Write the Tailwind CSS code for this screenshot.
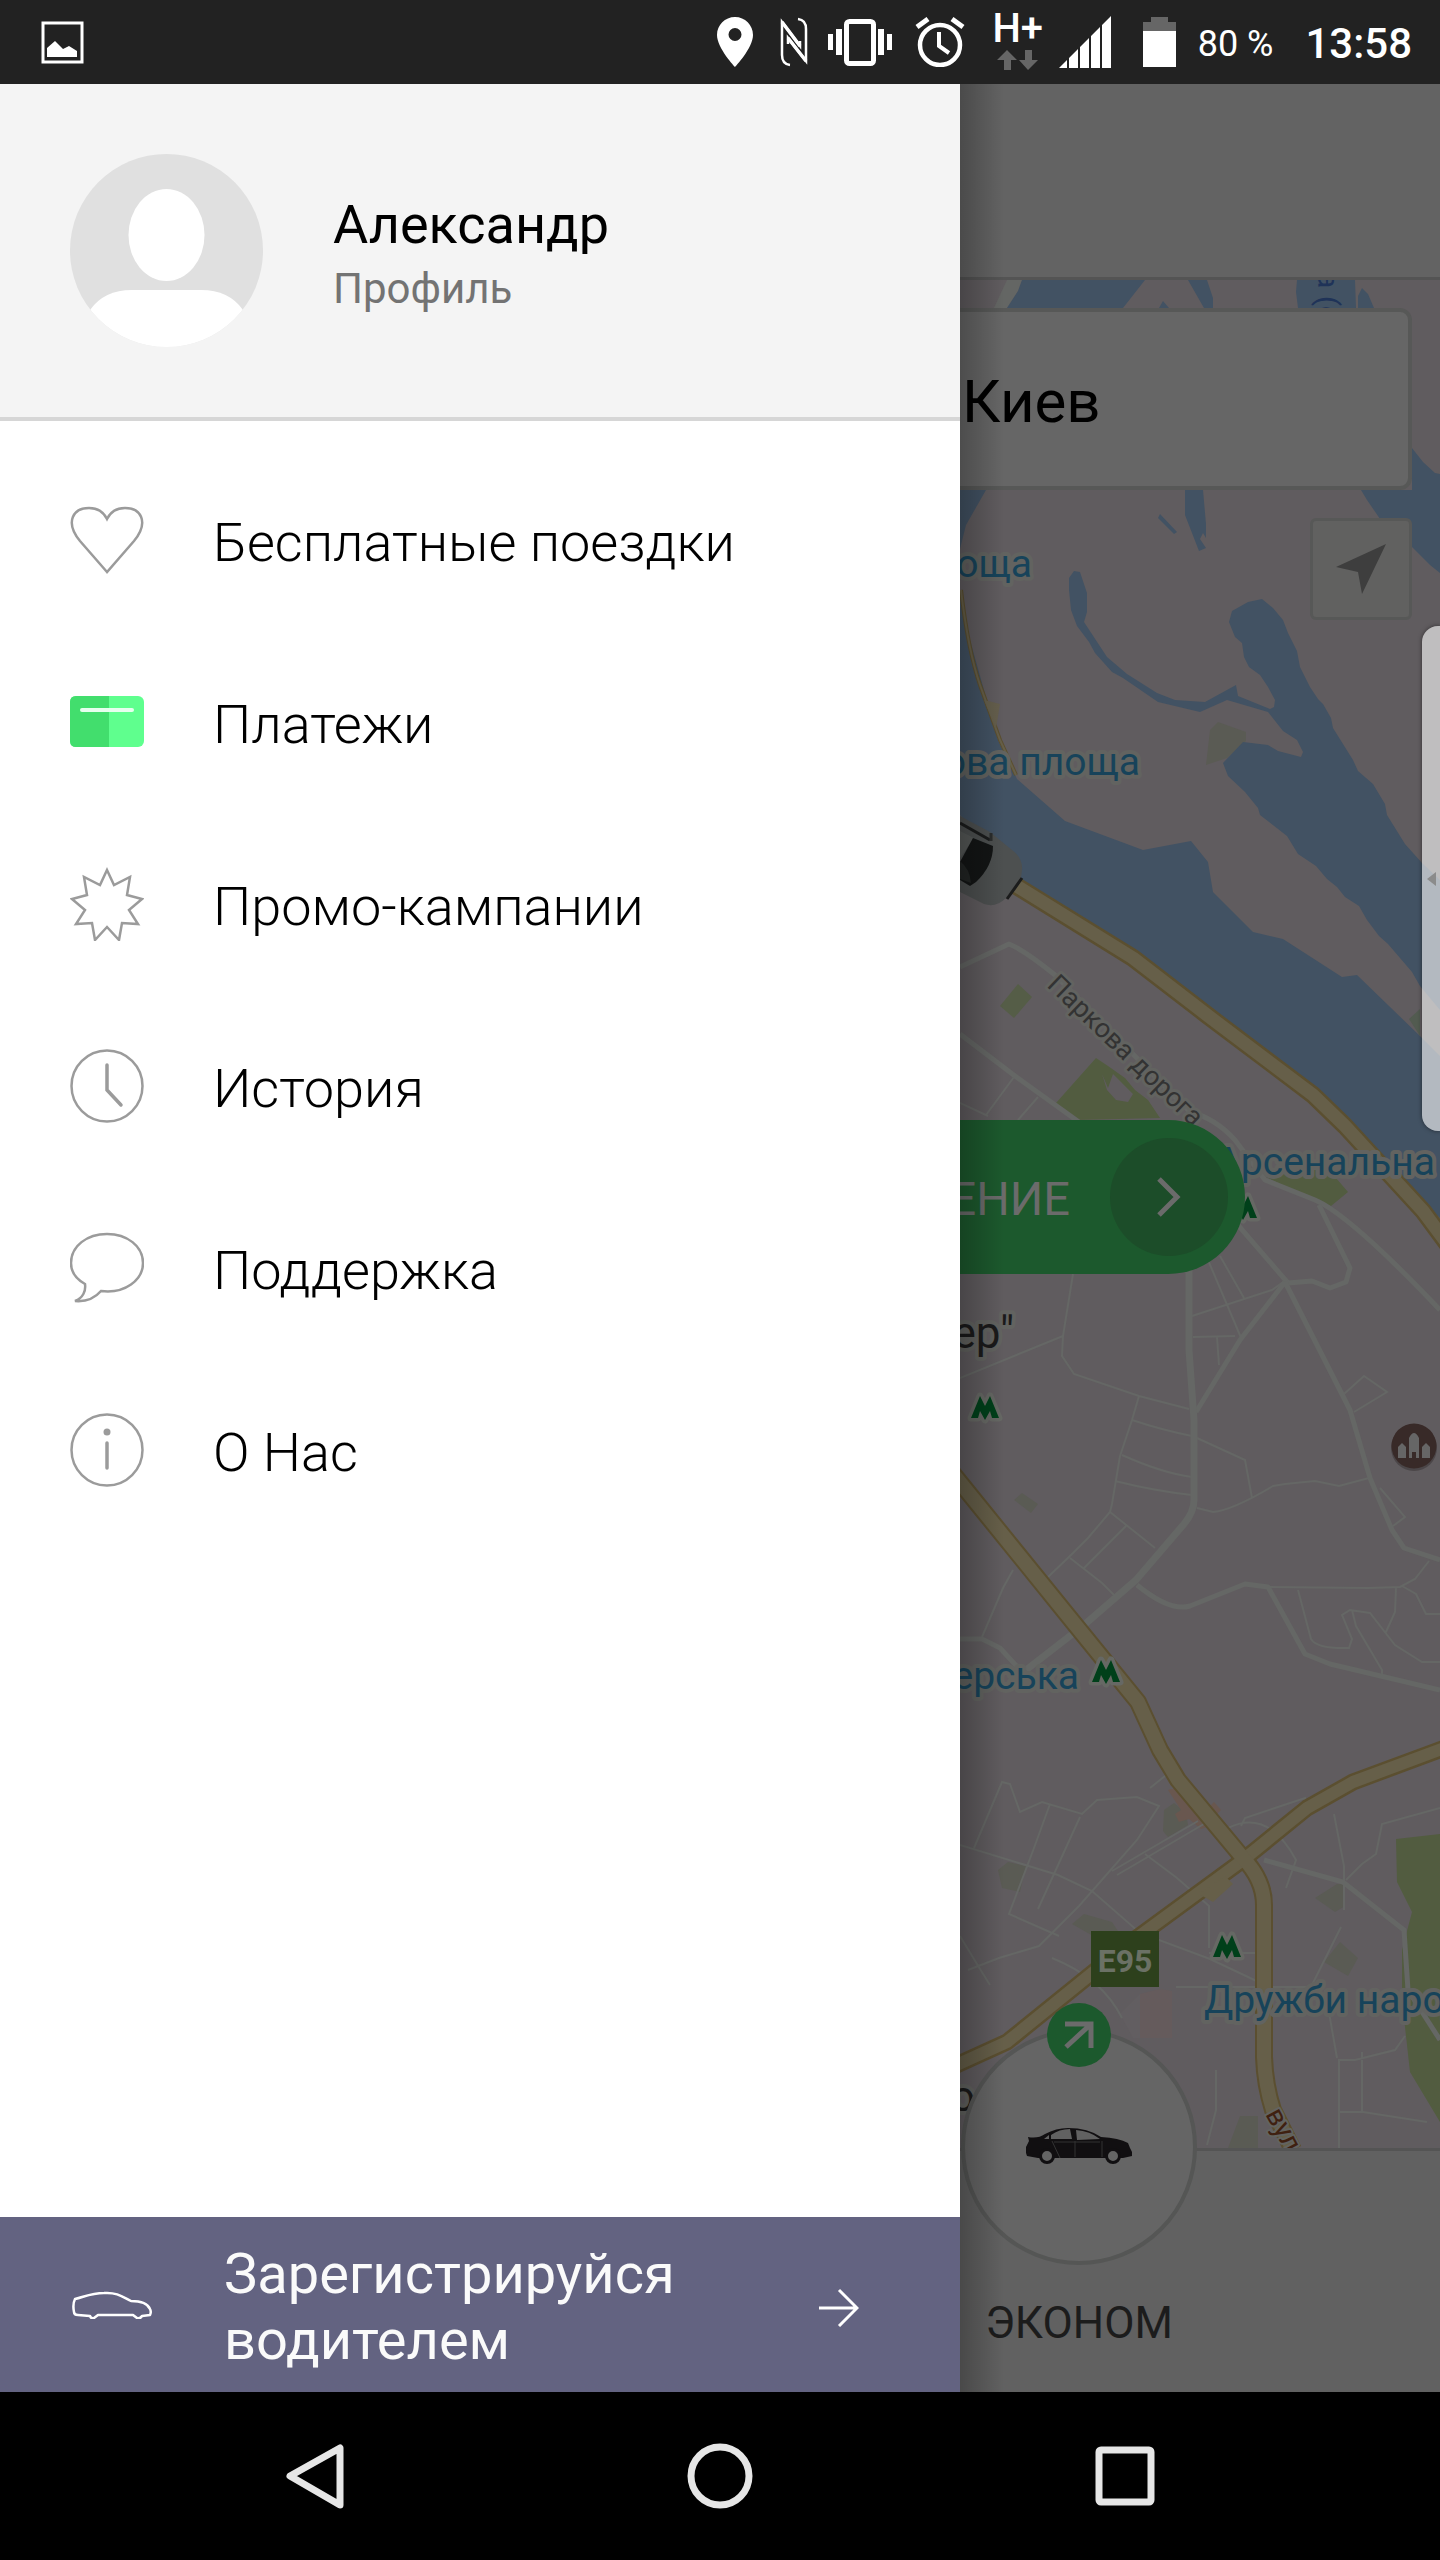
<!DOCTYPE html>
<html lang="ru">
<head>
  <meta charset="UTF-8" />
  <title>Меню</title>
  <meta name="viewport" content="width=device-width, initial-scale=1.0"/>
  <script src="https://cdn.jsdelivr.net/npm/@tailwindcss/browser@4"></script>
</head>
<body class="min-h-screen flex flex-col bg-black font-['Roboto',sans-serif] text-black">

  <!-- Status bar -->
  <header class="h-[84px] shrink-0 bg-[#222222] text-white flex items-center pl-[41px] pr-[28px]">
    <svg class="w-[43px] h-[43px]" viewBox="0 0 43 43" fill="none">
      <rect x="2" y="2" width="39" height="39" stroke="#fff" stroke-width="3"/>
      <path d="M6 36V27l8-7 8 8 6-3 8 5v6z" fill="#fff"/>
    </svg>
    <div class="ml-auto flex items-center">
      <svg class="w-[36px] h-[50px]" viewBox="0 0 36 50" fill="#fff">
        <path fill-rule="evenodd" d="M18 0C8 0 0 8 0 18c0 13 18 32 18 32s18-19 18-32C36 8 28 0 18 0zm0 11a6.500 6.500 0 1 1 0 13 6.500 6.500 0 0 1 0-13z"/>
      </svg>
      <svg class="ml-[27px] w-[28px] h-[50px]" viewBox="0 0 28 50" fill="none" stroke="#fff" stroke-width="2.500">
        <path d="M10 48Q2 47 2 38V5L20 29V24"/>
        <path d="M18 2Q26 3 26 12V44L8 21V27"/>
        <path d="M2 5L20 29M26 44L8 21" stroke-width="3.500"/>
      </svg>
      <svg class="ml-[20px] w-[64px] h-[50px]" viewBox="0 0 64 50">
        <rect x="18.500" y="4.500" width="27" height="42" rx="3" fill="none" stroke="#fff" stroke-width="5"/>
        <path d="M0 17h5v16H0zM8 12h6v26H8zM50 12h6v26h-6zM59 17h5v16h-5z" fill="#fff"/>
      </svg>
      <svg class="ml-[23px] w-[50px] h-[50px]" viewBox="0 0 50 50" fill="none" stroke="#fff" stroke-width="4.500">
        <circle cx="25" cy="28" r="20"/>
        <path d="M24 15v14l10 7" stroke-width="4"/>
        <path d="M2 10L13 2M48 10L37 2" stroke-width="5"/>
      </svg>
      <div class="ml-[31px] w-[44px] h-[60px] flex flex-col items-center">
        <span class="text-[40px] leading-[34px] font-medium">H+</span>
        <svg class="mt-1 w-[42px] h-[20px] shrink-0" viewBox="0 0 42 20" fill="#666">
          <path d="M10 0l10 10h-6v10H7V10H0zM31 20l10-10h-6V0h-7v10h-6z"/>
        </svg>
      </div>
      <svg class="ml-[19px] w-[52px] h-[52px]" viewBox="0 0 52 52" fill="#fff">
        <path d="M0 52l8-8v8zM10 52V42l9-9v19zM21 52V31l9-9v30zM32 52V20l9-9v41zM43 52V9l9-9v52z"/>
      </svg>
      <svg class="ml-[32px] w-[33px] h-[50px]" viewBox="0 0 33 50">
        <path d="M0 14V5h8V0h17v5h8v9z" fill="#666"/>
        <path d="M0 14h33v36H0z" fill="#fff"/>
      </svg>
      <span class="ml-[22px] pt-1 text-[36px] leading-[50px]">80 %</span>
      <span class="ml-[32px] pt-1 text-[42px] leading-[50px] font-medium">13:58</span>
    </div>
  </header>

  <main class="flex-1 flex min-h-0">

    <!-- Drawer -->
    <aside class="w-2/3 shrink-0 flex flex-col bg-white">
      <a href="#" class="flex items-center gap-[70px] h-[337px] pl-[70px] bg-[#f4f4f4] border-b-4 border-[#d6d6d6]">
        <svg class="w-[193px] h-[193px]" viewBox="0 0 193 193">
          <defs><clipPath id="face"><circle cx="96.500" cy="96.500" r="96.500"/></clipPath></defs>
          <g clip-path="url(#face)">
            <path d="M0 0h193v193H0z" fill="#e0e0e0"/>
            <ellipse cx="96.500" cy="81" rx="38" ry="46" fill="#fff"/>
            <path d="M0 193l20-37q14-20 42-20h69q28 0 42 20l20 37z" fill="#fff"/>
          </g>
        </svg>
        <span class="pt-3 flex flex-col">
          <span class="text-[54px] leading-[64px]">Александр</span>
          <span class="text-[42px] leading-[64px] text-[#737373]">Профиль</span>
        </span>
      </a>

      <nav class="flex-1 pt-[28px] text-[54px] leading-[64px] font-light">
        <a href="#" class="flex items-center gap-[69px] h-[182px] pl-[70px]">
          <svg class="w-[74px] h-[74px]" viewBox="0 0 74 74" fill="none" stroke="#9b9b9b" stroke-width="2.500">
            <path d="M37 69L10 38C-6 18 4 5 19 5c9 0 15 5 18 11 3-6 9-11 18-11 15 0 25 13 9 33z"/>
          </svg>
          <span class="pt-[6px]">Бесплатные поездки</span>
        </a>
        <a href="#" class="flex items-center gap-[69px] h-[182px] pl-[70px]">
          <svg class="w-[74px] h-[74px]" viewBox="0 0 74 74">
            <rect x="0" y="11" width="74" height="51" rx="6" fill="#5fff8e"/>
            <path d="M39 11H6q-6 0-6 6v39q0 6 6 6h33z" fill="#42de6d"/>
            <path d="M12 25h50" stroke="#e6ffee" stroke-width="4" stroke-linecap="round"/>
          </svg>
          <span class="pt-[6px]">Платежи</span>
        </a>
        <a href="#" class="flex items-center gap-[69px] h-[182px] pl-[70px]">
          <svg class="w-[74px] h-[74px]" viewBox="0 0 74 74" fill="none" stroke="#9b9b9b" stroke-width="2.500">
            <path d="M37 3l7 15 16-8-3 18 15 4-13 11 9 14-16-1-3 17-12-13-12 13-3-17-16 1 9-14L2 32l15-4-3-18 16 8z"/>
          </svg>
          <span class="pt-[6px]">Промо-кампании</span>
        </a>
        <a href="#" class="flex items-center gap-[69px] h-[182px] pl-[70px]">
          <svg class="w-[74px] h-[74px]" viewBox="0 0 74 74" fill="none" stroke="#9b9b9b" stroke-width="2.500">
            <circle cx="37" cy="37" r="35.500"/>
            <path d="M37 16v25l14 15" stroke-width="3.500" stroke-linecap="round"/>
          </svg>
          <span class="pt-[6px]">История</span>
        </a>
        <a href="#" class="flex items-center gap-[69px] h-[182px] pl-[70px]">
          <svg class="w-[74px] h-[74px]" viewBox="0 0 74 74" fill="none" stroke="#9b9b9b" stroke-width="2.500">
            <path d="M37 3C17 3 1 15 1 32c0 9 5 16 14 21 1 7-2 14-10 17 12 1 20-3 26-10 24 3 42-11 42-28C73 15 57 3 37 3z"/>
          </svg>
          <span class="pt-[6px]">Поддержка</span>
        </a>
        <a href="#" class="flex items-center gap-[69px] h-[182px] pl-[70px]">
          <svg class="w-[74px] h-[74px]" viewBox="0 0 74 74" fill="none" stroke="#9b9b9b" stroke-width="2.500">
            <circle cx="37" cy="37" r="35.500"/>
            <path d="M37 30v25" stroke-width="3.500" stroke-linecap="round"/>
            <circle cx="37" cy="19" r="3.500" fill="#9b9b9b" stroke="none"/>
          </svg>
          <span class="pt-[6px]">О Нас</span>
        </a>
      </nav>

      <a href="#" class="h-[175px] shrink-0 flex items-center pl-[72px] pr-[101px] bg-[#636381] text-[#fafafa]">
        <svg class="w-[80px] h-[28px] mr-[72px]" viewBox="0 0 80 28" fill="none" stroke="#fff" stroke-width="2.500" stroke-linejoin="round">
          <path d="M2 21c-1-5-1-9 1-13C12 6 19 2 32 2c13-1 19 4 27 8 10 0 17 3 19 8 1 2 1 4 0 6l-8 1q-2 3-5 2l-4-3H26l-4 3q-3 1-4-2l-12-1q-4 0-4-3z"/>
        </svg>
        <span class="pt-1 w-[460px] text-[56px] leading-[66px]">Зарегистрируйся водителем</span>
        <svg class="ml-auto w-[40px] h-[44px]" viewBox="0 0 40 44" fill="none" stroke="#fff" stroke-width="3">
          <path d="M0 25h38M20 7l18 18-18 18"/>
        </svg>
      </a>
    </aside>

    <!-- Order screen behind the drawer -->
    <section class="relative flex-1 flex flex-col overflow-hidden bg-[#616161]">
      <div class="h-[196px] shrink-0 bg-[#636363] border-b-3 border-[#545454]"></div>

      <div class="relative flex-1 min-h-0 bg-[#605c5f]">
        <svg class="absolute inset-0 w-full h-full" viewBox="960 280 480 1868" preserveAspectRatio="xMinYMin slice">
          <!-- parks -->
          <g fill="#525c40">
            <path d="M1056 1103L1096 1058 1108 1066 1125 1078 1135 1090 1148 1100 1160 1118 1075 1120z"/>
            <path d="M1266 1177L1290 1170 1306 1154 1330 1171 1348 1192 1331 1206 1300 1194z"/>
            <path d="M1000 1006L1018 984 1032 997 1014 1018z" fill="#555d47"/>
            <path d="M1396 1839L1440 1834V2122L1410 2072 1402 2000 1402 1950 1412 1912 1397 1882z"/>
          </g>
          <path d="M1102 1074l6 14 5-14 8 8 12 12-5 8-12-2-9-10z" fill="#605c5f"/>
          <g fill="#5a5b54">
            <path d="M1210 730L1218 722 1246 732V741L1227 758 1206 765z"/>
            <path d="M1014 1500l8-7 16 11-7 9z"/>
            <path d="M1164 1810l10-7 12 10 2 12-20 12-5-6z"/>
            <path d="M998 1870l10-8 18 4-6 26-18-4z"/>
            <path d="M1072 1924l12-10 28 8 8 12-20 6z"/>
            <path d="M1315 1898l22-14h8v22l-10 6z"/>
            <path d="M1324 1962l16-20 18 16-10 18z"/>
            <path d="M1228 2148l12-32h18v32z"/>
          </g>
          <path d="M1168 1790l8-2 34 38-9 3-12-10-10 3-4-8 6-4z M1208 1808l6-6 7 8-8 8z" fill="#69574f"/>
          <path d="M1120 2014L1140 1994V2038H1133z" fill="#625e61"/>
          <path d="M1140 1994L1160 1989 1172 1991V2038H1140z" fill="#655b5c"/>

          <!-- water -->
          <path d="M1007 280H1022L1018 291 1007 308H994z" fill="#646664"/>
          <g fill="#425263">
            <path d="M1022 280H1145L1123 308H1007L1018 291zM1188 280H1207L1213 298V308H1204zM1159 308L1163 301 1169 308zM1297 280H1355L1356 308H1298L1296 292zM1358 308L1358 296 1362 288 1368 294 1374 308z"/>
            <path d="M1361 490H1412V448L1423 462 1435 473 1440 474V573L1430 565 1412 547 1382 522 1378 516 1367 500z"/>
            <path d="M960 490H986L966 525 960 549z"/>
            <path d="M1185 490H1203L1206 524V538L1203 533 1200 539 1206 548 1199 551 1185 515z"/>
            <path d="M1160 514L1177 532 1174 534 1158 518z"/>
            <path d="M960 590L970 640 984 690 998 740 1017 779 1065 821 1143 850 1191 841 1208 862 1213 892 1226 905 1253 932 1283 939 1342 977 1357 975 1420 1036 1440 1056V1218L1407 1190 1345 1117 1273 1056 1207 1008 1140 956 1123 944 1025 885 960 815z"/>
            <path d="M1232 611L1248 602 1262 599 1273 608 1283 620 1288 633 1297 651 1300 667 1310 687 1318 699 1323 704 1331 718 1333 728 1353 760 1358 771 1373 784 1385 804 1387 815 1405 844 1422 863 1440 880V1010L1420 986 1412 972 1388 944 1379 936 1367 920 1359 906 1345 897 1337 887 1327 879 1316 866 1298 854 1287 836 1260 815 1258 808 1245 792 1228 776 1223 763 1243 742 1268 745 1278 751 1301 757 1303 752 1297 740 1283 731 1268 712 1227 700 1200 712 1158 702 1123 678 1112 672 1095 653 1089 642 1077 626 1071 610 1069 590V578L1074 571 1080 572 1087 593V612L1084 622 1107 657 1127 674 1157 693 1175 700 1205 702 1236 685 1238 696 1270 709 1274 707 1275 700 1268 687 1260 675 1249 667 1244 657 1242 643 1235 637 1229 622z"/>
          </g>
          <path d="M1409 1019l11-10v27z" fill="#525b50"/>

          <!-- side streets -->
          <g fill="none" stroke="#656765" stroke-width="2">
            <path d="M960 1103l28 13M986 1115l28-38M1018 1120l20-23M1073 1274l-10 62-103 42M1063 1336l-1 20 12 18 65 22 50 13M1139 1396l-7 24-12 36-8 48-2 8-22 26-16 16-25 24M1132 1420q30 10 60 16M1122 1455q40 18 70 22M1115 1481q40 10 77 14M1110 1512l20 16 25 20M1126 1526l-42 42M1070 1558l32 25 14 14M1013 1570l-10 18-21 49"/>
            <path d="M1208 1260l34 80M1220 1256l24 42M1192 1316l80-26 14-10M1193 1337l42-1M1217 1337l2 28M1197 1438l48 22 7 38M1197 1508l16 4q20-2 60-26l12-2 30-3 24 5 30-8M1344 1394l20-18 23 16-33 20M1380 1488l25 29-12 9M1268 1587l100 1 32-1 15-8 14-18M1298 1590l13 49q6 10 38 9l3-9-10-24 8-5 20 3 25 32 27 17h18M1352 1610l4 16 26 44v8M1396 1588l-1 24-9 20M1402 1586l14 8 10 20h14"/>
            <path d="M960 1845l98 30 34 16 48 42 70 26 55 26M974 1848l28-66 8 2 10 28 22-10 40 12 15-14 40-3 12 5 10 4-22 34-58 66-40 40-40 12-31 12M1050 1804l-16 44-25 66 50 22M1080 1817l-42 92M1112 1871l86-50M1117 1875l92-54M1145 1854l32 24 32 28v42M1150 1788l20-16M960 1936l20 33 10 16M1052 1958q50 20 70 60M1176 1987h135l30-60M1241 1826l4-8 60-20 2 18M1228 1828q40-20 68 32l-10 28M1334 1814l10 52v44M1346 1880l16-16 14-10 6-30 58-16M1216 2070v40l-9 35M1325 1990l12 68M1339 2148V2060h16l40-10 10-14M1362 2052v60M1339 2112h24l64 10M1209 1953h56"/>
          </g>

          <!-- streets -->
          <g fill="none" stroke="#656765" stroke-width="5" stroke-linejoin="round">
            <path d="M960 967L1009 944Q1024 950 1055 975L1190 1112Q1215 1118 1235 1140L1265 1180 1315 1200Q1350 1215 1440 1310"/>
            <path d="M960 1034L1015 1076 1090 1130"/>
            <path d="M1319 1205L1350 1268 1346 1282 1330 1288 1312 1281 1288 1283 1225 1210"/>
            <path d="M1285 1282L1240 1340 1196 1412M1285 1282L1350 1410 1370 1478 1392 1530 1404 1548 1440 1560"/>
            <path d="M1137 1585Q1170 1612 1190 1606L1245 1584 1268 1587 1305 1654 1330 1664 1440 1690"/>
            <path d="M960 1639h22l18 9 22 24"/>
          </g>
          <path d="M1189 1270V1350L1194 1420V1500Q1194 1512 1184 1524L1136 1580 1084 1625 1026 1670" fill="none" stroke="#656765" stroke-width="7"/>
          <path d="M1264 1860L1343 1882 1404 1930 1408 1990 1440 2040" fill="none" stroke="#656765" stroke-width="5"/>

          <!-- highways -->
          <g fill="none" stroke-linejoin="round">
            <g stroke="#5b4f30">
              <path d="M961 590Q968 650 980 685L1000 740 1016 775" stroke-width="4"/>
              <path d="M1010 882L1133 958 1207 1015 1313 1095 1345 1126 1423 1211 1452 1250" stroke-width="18"/>
              <path d="M950 1470L1073 1622 1138 1702 1160 1750 1178 1780 1243 1858Q1264 1880 1264 1905V2057Q1265 2085 1273 2110L1293 2150" stroke-width="18"/>
              <path d="M1450 1746L1353 1782 1307 1808 1243 1860 1127 1945 1007 2042 950 2068" stroke-width="17"/>
            </g>
            <g stroke="#665f49">
              <path d="M961 590Q968 650 980 685L1000 740 1016 775" stroke-width="2"/>
              <path d="M1010 882L1133 958 1207 1015 1313 1095 1345 1126 1423 1211 1452 1250" stroke-width="13"/>
              <path d="M1450 1746L1353 1782 1307 1808 1243 1860 1127 1945 1007 2042 950 2068" stroke-width="12"/>
              <path d="M950 1470L1073 1622 1138 1702 1160 1750 1178 1780 1243 1858Q1264 1880 1264 1905V2057Q1265 2085 1273 2110L1293 2150" stroke-width="14"/>
            </g>
            <path d="M1199 1894l26-18 8 8-20 18z" fill="#665f49"/>
          </g>
          <path d="M984 700l16 4-4 24z" fill="#655f4d"/>

          <!-- taxi on the map -->
          <path d="M960 816L990 832 1012 850Q1023 858 1022 870L1021 878 1006 898Q996 908 984 904L960 892z" fill="#4d5050"/>
          <path d="M960 831L974 838 960 858z" fill="#565958"/>
          <path d="M973 838l20 8q0 20-17 36l-6 4-10-6v-18z" fill="#131515"/>
          <path d="M960 861q10 8 11 22l-11-4z" fill="#222524"/>
          <path d="M960 823l30 17M1007 899l15-21" stroke="#1b1c1c" stroke-width="3"/>
          <path d="M991 833v8" stroke="#2b2d2d" stroke-width="3"/>

          <!-- metro marks -->
          <g fill="#00401a" stroke="#666864" stroke-width="7" paint-order="stroke" stroke-linejoin="round">
            <path d="M971 1418l9-22 5 10 5-10 9 22h-7l-2-7-5 9-5-9-2 7z"/>
            <path d="M1092 1682l9-22 5 10 5-10 9 22h-7l-2-7-5 9-5-9-2 7z"/>
            <path d="M1213 1957l9-22 5 10 5-10 9 22h-7l-2-7-5 9-5-9-2 7z"/>
            <path d="M1229 1218l9-22 5 10 5-10 9 22h-7l-2-7-5 9-5-9-2 7z"/>
          </g>

          <!-- monument pin -->
          <circle cx="1414" cy="1448" r="23" fill="#4b4648"/>
          <circle cx="1414" cy="1446" r="22.500" fill="#382a28"/>
          <path d="M1409 1458v-20q5-10 10 0v20h-3v-6h-4v6zM1398 1458v-11l4-4 4 4v11zM1422 1458v-11l4-4 4 4v11z" fill="#666"/>

          <g font-family="Roboto, sans-serif" paint-order="stroke" stroke="#626360" stroke-width="8" stroke-linejoin="round" font-size="39" fill="#17435a">
            <text x="1032" y="577" text-anchor="end">оща</text>
            <text x="1140" y="775" text-anchor="end">ова площа</text>
            <text x="1435" y="1175" text-anchor="end">Арсенальна</text>
            <text x="1079" y="1689" text-anchor="end">ерська</text>
            <text x="1204" y="2013">Дружби народ</text>
            <text x="1014" y="1348" text-anchor="end" font-size="44" fill="#1a1a1a">ер"</text>
            <text x="975" y="2111" text-anchor="end" font-size="42" fill="#1a1a1a">о</text>
            <text transform="translate(1046 986) rotate(44)" font-size="27" fill="#333333" stroke-width="6">Паркова дорога</text>
            <text transform="translate(1265 2114) rotate(62)" font-size="28" fill="#3f2010" stroke-width="4">вул.</text>
            <text transform="translate(1318 272) rotate(90)" font-size="30" fill="#1f3358" stroke="none">а (о</text>
          </g>
          <path d="M1091 1931h68v56h-68z" fill="#2d401c"/>
          <text x="1125" y="1972" text-anchor="middle" font-family="Roboto, sans-serif" font-size="32" font-weight="700" fill="#6b7165">E95</text>
        </svg>

        <!-- address field -->
        <input type="text" aria-label="Адрес" value="Киев" class="absolute top-[28px] -left-4 right-[28px] h-[182px] pt-1 pl-[14px] rounded-xl border-4 border-[#575857] bg-[#666666] text-[60px] text-black"/>

        <button type="button" aria-label="Моё местоположение" class="absolute top-[238px] right-[28px] w-[102px] h-[102px] rounded-md border-3 border-[#575857] bg-[#616160] flex items-center justify-center">
          <svg class="w-[50px] h-[50px]" viewBox="0 0 50 50"><path d="M50 0L26 50 22 28 0 23z" fill="#3e3e3e"/></svg>
        </button>

        <button type="button" class="absolute top-[840px] left-0 w-[285px] h-[154px] pr-[17px] rounded-r-full bg-[#1c592d] flex items-center justify-end gap-[40px] text-[47px] text-[#6b6b6b]">
          <span class="pt-1">ЕНИЕ</span>
          <span class="w-[118px] h-[118px] shrink-0 rounded-full bg-[#1c4d29] flex items-center justify-center">
            <svg class="w-[24px] h-[40px]" viewBox="0 0 24 40" fill="none" stroke="#6b6b6b" stroke-width="5"><path d="M2 2l18 18L2 38"/></svg>
          </span>
        </button>

        <!-- edge panel handle -->
        <div class="absolute top-[346px] right-0 w-[18px] h-[505px] rounded-l-2xl bg-white/60 shadow-[0_0_4px_#00000080] flex items-center justify-center">
          <svg class="w-[9px] h-[14px]" viewBox="0 0 9 14"><path d="M9 0v14L0 7z" fill="#8b8b8b"/></svg>
        </div>
      </div>

      <!-- tariff -->
      <div class="relative h-[244px] shrink-0 border-t-3 border-[#545454]">
        <button type="button" class="-mt-[122px] w-[238px] flex flex-col items-center text-[44px] leading-[56px] text-[#1c1c1c]">
          <span class="relative w-[236px] h-[236px] rounded-full border-4 border-[#555655] bg-[#656565] flex items-center justify-center">
            <span class="absolute -top-[30px] left-[82px] w-[64px] h-[64px] rounded-full bg-[#1c592d] flex items-center justify-center">
              <svg class="w-[30px] h-[28px]" viewBox="0 0 30 28" fill="none" stroke="#6b6b6b" stroke-width="5"><path d="M1 3h26v24M27 3L2 26"/></svg>
            </span>
            <svg class="w-[106px] h-[40px]" viewBox="0 0 106 40">
              <path d="M0 20l3-6-1-4q10 2 17-3Q30 1 42 1q20 0 33 9 18 1 27 6l2 5 2 4v4l-9 2H12L1 29q-2-5-1-9z" fill="#110f11"/>
              <path d="M25 8q8-6 19-6l2 10H25zM18 12l5-4v4zM50 3q14 1 24 9l-23 1z" fill="#616161"/>
              <path d="M26 14l8 17M49 14v16M76 14v16M28 15h46" fill="none" stroke="#333" stroke-width="1"/>
              <g fill="#656565" stroke="#110f11" stroke-width="3"><circle cx="21" cy="29" r="6.500"/><circle cx="87" cy="29" r="6.500"/></g>
            </svg>
          </span>
          <span class="mt-[30px]">ЭКОНОМ</span>
        </button>
      </div>

      <!-- drawer shadow -->
      <div class="absolute inset-y-0 left-0 w-11 bg-linear-to-r from-black/25 to-transparent"></div>
    </section>
  </main>

  <!-- Navigation bar -->
  <footer class="h-[168px] shrink-0 bg-black grid grid-cols-3 items-center justify-items-center px-28">
    <button type="button" aria-label="Назад">
      <svg class="w-[66px] h-[66px]" viewBox="0 0 66 66" fill="none" stroke="#e6e6e6" stroke-width="7" stroke-linejoin="round"><path d="M58 5v57L8 33z"/></svg>
    </button>
    <button type="button" aria-label="Домой">
      <svg class="w-[66px] h-[66px]" viewBox="0 0 66 66" fill="none" stroke="#e6e6e6" stroke-width="7"><circle cx="33" cy="33" r="29"/></svg>
    </button>
    <button type="button" aria-label="Недавние">
      <svg class="w-[66px] h-[66px]" viewBox="0 0 66 66" fill="none" stroke="#e6e6e6" stroke-width="7"><rect x="7" y="7" width="52" height="52" rx="2"/></svg>
    </button>
  </footer>

</body>
</html>
